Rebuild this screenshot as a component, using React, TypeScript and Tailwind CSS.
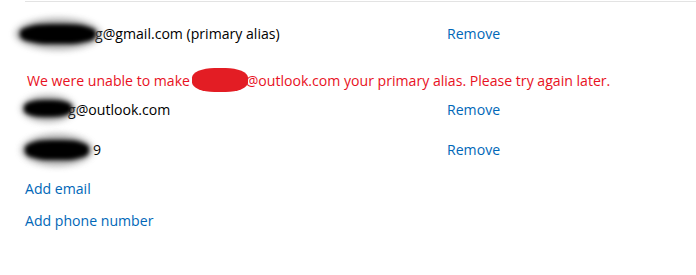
import React from "react";

// scribbled-out part of an address
const Scribble = ({ className }: { className: string }) => (
  <span className={`pointer-events-none absolute ${className}`}>
    <span className="absolute inset-0 rounded-[50%] bg-[#8c8c8c] opacity-70 blur-[3px]" />
    <span className="absolute inset-x-[6%] inset-y-[18%] rounded-[40%] bg-black blur-[2px]" />
  </span>
);

const RemoveLink = () => (
  <a href="#" className="text-[#0067b8] hover:underline">
    Remove
  </a>
);

export default function App() {
  return (
    <div
      className="h-[275px] w-[696px] overflow-hidden bg-white text-[14.1px] leading-5 text-black"
      style={{ fontFamily: '"Open Sans", "Noto Sans", sans-serif' }}
    >
      <div className="ml-[25px] mt-px border-t border-[#e3e3e3]" />

      <div className="pl-[25px]">
        {/* primary alias */}
        <div className="mt-[22px] flex">
          <div className="relative w-[422px]">
            <Scribble className="left-[-10px] top-[-6px] h-[32px] w-[86px]" />
            <span className="inline-block w-[70px]" />
            <span>g@gmail.com (primary alias)</span>
          </div>
          <RemoveLink />
        </div>

        {/* error */}
        <div className="relative mt-[27px] pl-[2px] text-[#e81123]">
          We were unable to make{" "}
          <span className="relative inline-block w-[52px]">
            <span className="absolute left-[-2px] top-[-3px] h-[24px] w-[56px] rounded-[40%] bg-[#e31d24]" />
            &nbsp;
          </span>
          @outlook.com your primary alias. Please try again later.
        </div>

        <div className="mt-[9px] flex">
          <div className="relative w-[422px]">
            <Scribble className="left-[-4px] top-[-5px] h-[27px] w-[54px]" />
            <span className="inline-block w-[43px]" />
            <span>g@outlook.com</span>
          </div>
          <RemoveLink />
        </div>

        <div className="mt-[20px] flex">
          <div className="relative w-[422px]">
            <Scribble className="left-[-4px] top-[-6px] h-[32px] w-[72px]" />
            <span className="inline-block w-[68px]" />
            <span>9</span>
          </div>
          <RemoveLink />
        </div>

        <div className="mt-[19px]">
          <a href="#" className="text-[#0067b8] hover:underline">
            Add email
          </a>
        </div>
        <div className="mt-[12px]">
          <a href="#" className="text-[#0067b8] hover:underline">
            Add phone number
          </a>
        </div>
      </div>
    </div>
  );
}
